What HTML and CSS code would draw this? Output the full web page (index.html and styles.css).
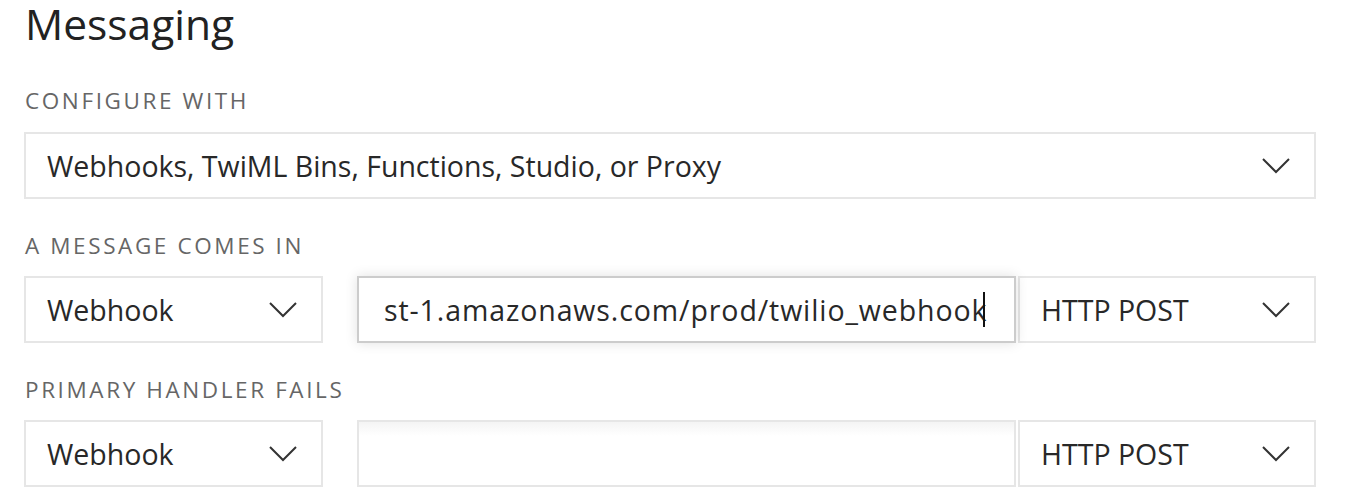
FILE: index.html
```html
<!DOCTYPE html>
<html>
    <head>
        <meta charset="utf-8">
        <title>Messaging</title>
        <link rel="stylesheet" href="styles.css">
    </head>
    <body>
        <div id="messaging">
            <h1>Messaging</h1>

            <p class="label first">Configure with</p>
            <div class="select wide">
                <span>Webhooks, TwiML Bins, Functions, Studio, or Proxy</span>
                <svg class="chevron" viewBox="0 0 28 16"><path d="M1 1 L14 14 L27 1"/></svg>
            </div>

            <p class="label">A message comes in</p>
            <div class="row">
                <div class="select kind">
                    <span>Webhook</span>
                    <svg class="chevron" viewBox="0 0 28 16"><path d="M1 1 L14 14 L27 1"/></svg>
                </div>
                <div class="url focused">
                    <span>st-1.amazonaws.com/prod/twilio_webhook</span><i class="caret"></i>
                </div>
                <div class="select method">
                    <span>HTTP POST</span>
                    <svg class="chevron" viewBox="0 0 28 16"><path d="M1 1 L14 14 L27 1"/></svg>
                </div>
            </div>

            <p class="label">Primary handler fails</p>
            <div class="row">
                <div class="select kind">
                    <span>Webhook</span>
                    <svg class="chevron" viewBox="0 0 28 16"><path d="M1 1 L14 14 L27 1"/></svg>
                </div>
                <div class="url empty"></div>
                <div class="select method">
                    <span>HTTP POST</span>
                    <svg class="chevron" viewBox="0 0 28 16"><path d="M1 1 L14 14 L27 1"/></svg>
                </div>
            </div>
        </div>
    </body>
</html>
```

FILE: styles.css
```css
* {
    padding: 0;
    margin: 0;
    box-sizing: border-box;
}

body {
    font-family: "Open Sans", Lato, sans-serif;
    color: #282828;
    background-color: #fff;
}

#messaging {
    width: 1316px;
    padding-left: 24px;
}

h1 {
    font-size: 42.5px;
    font-weight: 400;
    line-height: 48px;
    margin: 0 0 0 1px;
    color: #222;
}

.label {
    font-size: 22.5px;
    line-height: 26px;
    letter-spacing: 2.6px;
    text-transform: uppercase;
    color: #666;
    margin: 34px 0 17px 1px;
}

.label.first {
    margin-top: 40px;
    margin-bottom: 18px;
}

.select,
.url {
    height: 67px;
    border: 2px solid #e6e6e6;
    background-color: #fff;
    font-size: 28.5px;
    display: flex;
    align-items: center;
}

.select {
    padding: 0 24px 0 21px;
    justify-content: space-between;
}

.chevron {
    width: 28px;
    height: 16px;
    fill: none;
    stroke: #333;
    stroke-width: 2;
}

.row {
    display: flex;
}

.kind {
    width: 299px;
}

.url {
    flex: 1;
    margin-left: 34px;
    padding-left: 25px;
    overflow: hidden;
    white-space: nowrap;
}

.url.focused {
    border-color: #ccc;
    letter-spacing: 0.9px;
    box-shadow: 0 0 12px rgba(0, 0, 0, 0.12);
    position: relative;
    z-index: 1;
}

.caret {
    display: inline-block;
    width: 2px;
    height: 35px;
    background-color: #111;
    margin-left: -4px;
}

.url.empty {
    background: linear-gradient(#f4f4f4, #fff 14px);
}

.method {
    width: 298px;
    margin-left: 2px;
}
```
